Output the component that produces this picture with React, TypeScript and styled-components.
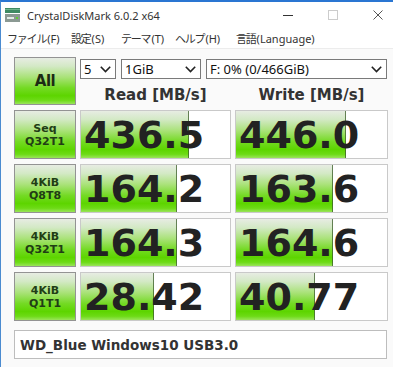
import React from 'react';
import styled, { createGlobalStyle } from 'styled-components';

const GlobalStyle = createGlobalStyle`
  html, body {
    margin: 0;
    padding: 0;
    background: #ffffff;
  }
  body {
    width: 393px;
    height: 367px;
    overflow: hidden;
  }
`;

type Row = { top: string; bottom: string; read: number; write: number };

const rows: Row[] = [
  { top: 'Seq', bottom: 'Q32T1', read: 436.5, write: 446.0 },
  { top: '4KiB', bottom: 'Q8T8', read: 164.2, write: 163.6 },
  { top: '4KiB', bottom: 'Q32T1', read: 164.3, write: 164.6 },
  { top: '4KiB', bottom: 'Q1T1', read: 28.42, write: 40.77 },
];

const menus = [
  { label: 'ファイル', key: '(F)', width: 64 },
  { label: '設定', key: '(S)', width: 50 },
  { label: 'テーマ', key: '(T)', width: 54 },
  { label: 'ヘルプ', key: '(H)', width: 61 },
  { label: '言語', key: '(Language)', width: 90 },
];

// CrystalDiskMark draws its bars on a log scale, 0.1 .. 10000 MB/s
const barPercent = (v: number) => Math.max(0, Math.min(1, Math.log10(v * 10) / 5)) * 100;

const formatValue = (v: number) => (v >= 100 ? v.toFixed(1) : v.toFixed(2));

const greenGradient = `linear-gradient(
  to bottom,
  #e7ece3 0%,
  #d3e9c5 18%,
  #a9e278 42%,
  #74da24 65%,
  #5dd500 82%,
  #6ddb16 92%,
  #9ae45a 100%
)`;

const App = () => {
  return (
    <>
      <GlobalStyle />
      <Window>
        <TitleBar>
          <AppIcon width="15" height="15" viewBox="0 0 15 15">
            <rect x="0" y="0" width="15" height="5" fill="#3f8a63" />
            <rect x="0" y="1" width="15" height="1" fill="#6fb58c" />
            <rect x="0" y="6" width="15" height="8" fill="#8b9993" />
            <rect x="2" y="9" width="7" height="2" fill="#e4ece8" />
            <rect x="11" y="9" width="2" height="2" fill="#5fd030" />
          </AppIcon>
          <Title>CrystalDiskMark 6.0.2 x64</Title>
          <Controls>
            <svg width="10" height="10" viewBox="0 0 10 10">
              <line x1="0" y1="5.5" x2="10" y2="5.5" stroke="#333" strokeWidth="1" />
            </svg>
            <svg width="10" height="10" viewBox="0 0 10 10">
              <rect x="0.5" y="0.5" width="9" height="9" fill="none" stroke="#cccccc" strokeWidth="1" />
            </svg>
            <svg width="10" height="10" viewBox="0 0 10 10">
              <path d="M0.5 0.5 L9.5 9.5 M9.5 0.5 L0.5 9.5" stroke="#555" strokeWidth="1" />
            </svg>
          </Controls>
        </TitleBar>

        <MenuBar>
          {menus.map((m) => (
            <MenuItem key={m.label} $width={m.width}>
              <Kana>{m.label}</Kana>
              {m.key}
            </MenuItem>
          ))}
        </MenuBar>

        <Content>
          <Grid>
            <AllButton>All</AllButton>
            <TopPanel>
              <Selects>
                <Select $width={36}>
                  <span>5</span>
                  <Chevron />
                </Select>
                <Select $width={80}>
                  <span>1GiB</span>
                  <Chevron />
                </Select>
                <Select $width={181}>
                  <span>F: 0% (0/466GiB)</span>
                  <Chevron />
                </Select>
              </Selects>
              <Headers>
                <Header>Read [MB/s]</Header>
                <Header>Write [MB/s]</Header>
              </Headers>
            </TopPanel>

            {rows.map((r, i) => (
              <React.Fragment key={i}>
                <TestButton>
                  {r.top}
                  <br />
                  {r.bottom}
                </TestButton>
                <ValueCell $pct={barPercent(r.read)}>{formatValue(r.read)}</ValueCell>
                <ValueCell $pct={barPercent(r.write)}>{formatValue(r.write)}</ValueCell>
              </React.Fragment>
            ))}
          </Grid>

          <Comment>WD_Blue Windows10 USB3.0</Comment>
        </Content>
      </Window>
    </>
  );
};

export default App;

const Chevron = () => (
  <ChevronIcon width="11" height="7" viewBox="0 0 11 7">
    <polyline points="0.8,0.8 5.5,5.6 10.2,0.8" fill="none" stroke="#222" strokeWidth="1.6" />
  </ChevronIcon>
);

const Window = styled.div`
  width: 393px;
  height: 367px;
  box-sizing: border-box;
  border-top: 2px solid #2a76d2;
  border-left: 1px solid #4b8bd0;
  background: #fafafa;
  display: flex;
  flex-direction: column;
  overflow: hidden;
`;

const TitleBar = styled.div`
  height: 26px;
  flex: none;
  display: flex;
  align-items: center;
  background: #ffffff;
  padding-left: 4px;
`;

const AppIcon = styled.svg`
  flex: none;
`;

const Title = styled.div`
  margin-left: 7px;
  font-family: 'Noto Sans', 'Open Sans', sans-serif;
  font-size: 11px;
  color: #333333;
  white-space: nowrap;
`;

const Controls = styled.div`
  margin-left: auto;
  margin-right: 10px;
  display: flex;
  align-items: center;
  gap: 35px;
  svg {
    display: block;
  }
`;

const MenuBar = styled.div`
  height: 20px;
  flex: none;
  display: flex;
  align-items: center;
  padding-left: 6px;
  background: #ffffff;
  border-bottom: 1px solid #ececec;
`;

const MenuItem = styled.div<{ $width: number }>`
  width: ${({ $width }) => $width}px;
  flex: none;
  font-family: 'Noto Sans', 'Noto Sans CJK JP', sans-serif;
  font-size: 11px;
  color: #333333;
  white-space: nowrap;
`;

const Kana = styled.span`
  font-family: 'Noto Sans CJK JP', sans-serif;
  letter-spacing: -1.2px;
  margin-right: 1px;
`;

const Content = styled.div`
  flex: 1;
  padding: 8px 5px 0 13px;
  display: flex;
  flex-direction: column;
`;

const Grid = styled.div`
  display: grid;
  grid-template-columns: 62px 151px 153px;
  grid-template-rows: 48px repeat(4, 49px);
  column-gap: 4px;
  row-gap: 5px;
`;

const buttonBase = `
  box-sizing: border-box;
  border: 1px solid #939393;
  background: ${greenGradient};
  display: flex;
  align-items: center;
  justify-content: center;
  text-align: center;
  font-family: 'DejaVu Sans', Verdana, sans-serif;
  font-weight: bold;
`;

const AllButton = styled.div`
  ${buttonBase}
  font-size: 15px;
  color: #1c2a14;
  letter-spacing: -0.5px;
`;

const TestButton = styled.div`
  ${buttonBase}
  font-size: 11px;
  line-height: 13px;
  color: #213d15;
`;

const TopPanel = styled.div`
  grid-column: 2 / 4;
  display: flex;
  flex-direction: column;
  padding-top: 2px;
`;

const Selects = styled.div`
  display: flex;
  gap: 5px;
  height: 20px;
`;

const Select = styled.div<{ $width: number }>`
  width: ${({ $width }) => $width}px;
  box-sizing: border-box;
  border: 1px solid #7a7a7a;
  background: #ffffff;
  display: flex;
  align-items: center;
  padding: 0 4px 0 3px;
  font-family: 'Noto Sans', 'Open Sans', sans-serif;
  font-size: 13px;
  color: #111111;
  white-space: nowrap;
`;

const ChevronIcon = styled.svg`
  margin-left: auto;
  flex: none;
  display: block;
`;

const Headers = styled.div`
  flex: 1;
  display: grid;
  grid-template-columns: 151px 153px;
  column-gap: 4px;
`;

const Header = styled.div`
  display: flex;
  align-items: flex-end;
  justify-content: center;
  padding-bottom: 1px;
  font-family: 'DejaVu Sans', Verdana, sans-serif;
  font-weight: bold;
  font-size: 15px;
  line-height: 18px;
  color: #333333;
`;

const ValueCell = styled.div<{ $pct: number }>`
  box-sizing: border-box;
  border: 1px solid #c9c9c9;
  background:
    linear-gradient(
      to right,
      transparent calc(${({ $pct }) => $pct}% - 1px),
      rgba(58, 92, 40, 0.75) calc(${({ $pct }) => $pct}% - 1px),
      rgba(58, 92, 40, 0.75) ${({ $pct }) => $pct}%,
      transparent ${({ $pct }) => $pct}%
    ),
    ${greenGradient} 0 0 / ${({ $pct }) => $pct}% 100% no-repeat,
    #ffffff;
  display: flex;
  align-items: center;
  padding-left: 3px;
  padding-top: 1px;
  font-family: 'DejaVu Sans', Verdana, sans-serif;
  font-weight: bold;
  font-size: 38px;
  line-height: 1;
  color: #222222;
  white-space: nowrap;
  overflow: hidden;
`;

const Comment = styled.div`
  margin-top: 9px;
  width: 373px;
  height: 29px;
  box-sizing: border-box;
  border: 1px solid #bdbdbd;
  background: #ffffff;
  display: flex;
  align-items: center;
  padding-left: 5px;
  font-family: 'DejaVu Sans', Verdana, sans-serif;
  font-weight: bold;
  font-size: 13.5px;
  color: #333333;
  white-space: nowrap;
`;
